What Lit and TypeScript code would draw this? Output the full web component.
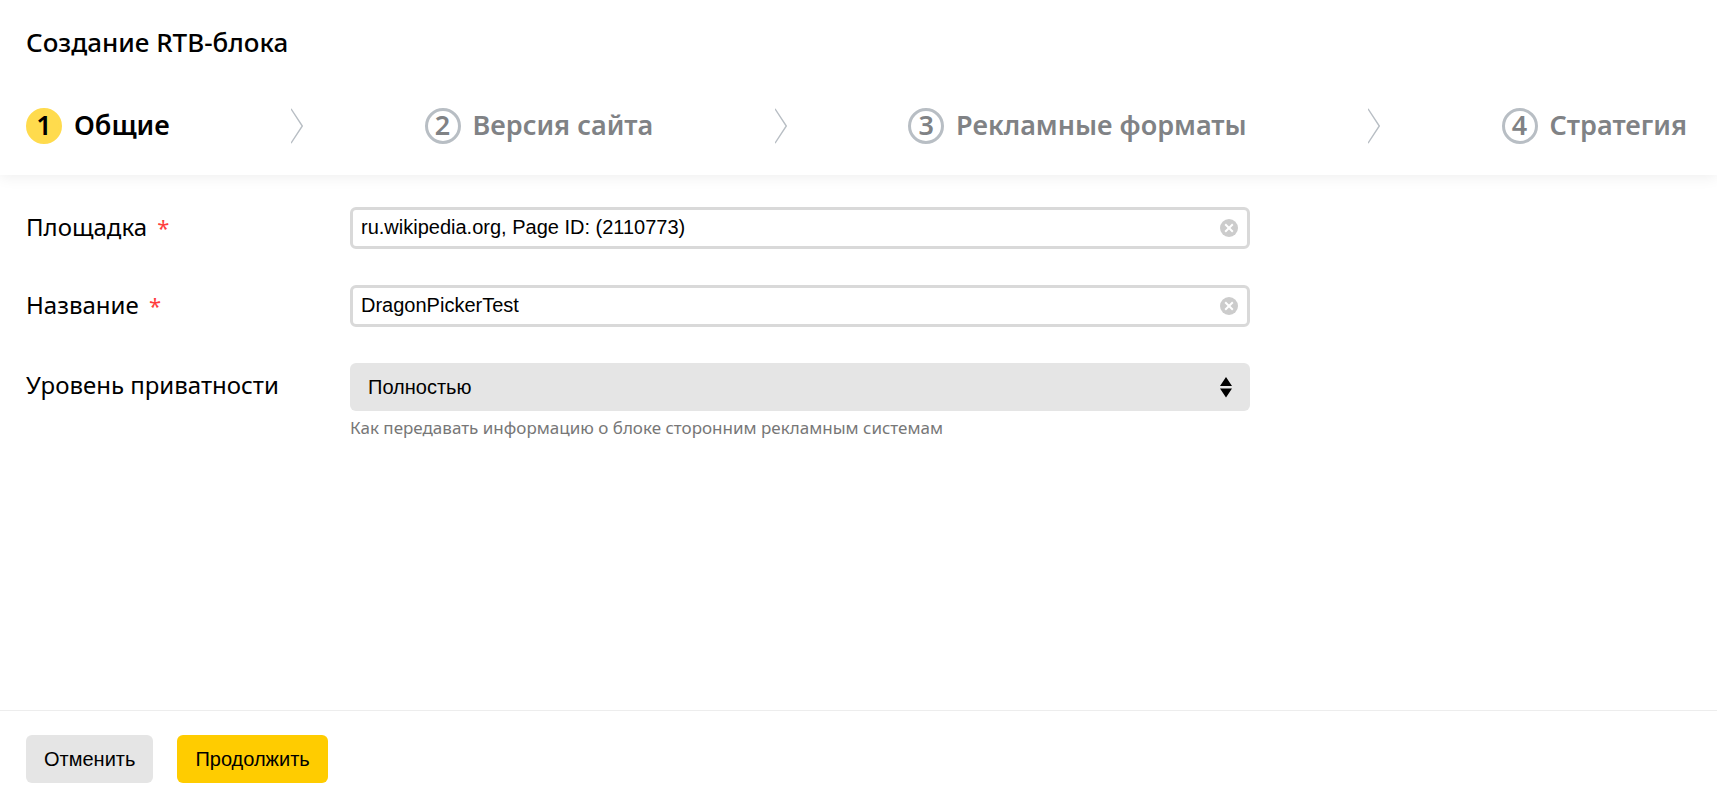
import { LitElement, html, css } from "lit";
import { customElement, state } from "lit/decorators.js";
import { classMap } from "lit/directives/class-map.js";

const STEPS = ["Общие", "Версия сайта", "Рекламные форматы", "Стратегия"];

@customElement("clearable-input")
class ClearableInput extends LitElement {
  static properties = { label: {}, value: {} };
  declare label: string;
  declare value: string;

  static styles = css`
    :host {
      display: block;
    }
    .box {
      display: flex;
      align-items: center;
      box-sizing: border-box;
      height: 42px;
      padding: 0 8px;
      border: 3px solid #d9d9d9;
      border-radius: 6px;
      background: #fff;
    }
    .input {
      flex: 1;
      min-width: 0;
      height: 32px;
      margin-bottom: 2px;
      padding: 0;
      border: 0;
      outline: 0;
      background: none;
      color: #000;
      font: 20px/32px Arial, "Liberation Sans", sans-serif;
    }
    .clear {
      display: flex;
      padding: 0;
      border: 0;
      background: none;
      cursor: pointer;
    }
  `;

  render() {
    return html`
      <div class="box">
        <input
          class="input"
          type="text"
          aria-label=${this.label}
          .value=${this.value}
          @input=${(e: Event) => (this.value = (e.target as HTMLInputElement).value)}
        />
        <button class="clear" type="button" aria-label="Очистить" @click=${() => (this.value = "")}>
          <svg width="20" height="20" viewBox="0 0 20 20">
            <circle cx="10" cy="10" r="9" fill="#ccc" />
            <path d="M6.2 6.2 13.800 13.800M13.800 6.2 6.2 13.800" stroke="#fff" stroke-width="2" />
          </svg>
        </button>
      </div>
    `;
  }
}

@customElement("app-root")
class AppRoot extends LitElement {
  @state() private current = 0;

  static styles = css`
    :host {
      display: flex;
      flex-direction: column;
      min-height: 100vh;
      background: #fff;
      color: #000;
      font-family: "Noto Sans", sans-serif;
    }
    .header {
      padding: 24px 26px 31px;
      box-shadow: 0 2px 14px rgba(0, 0, 0, 0.07);
    }
    .title {
      margin: 0 0 48px;
      font-size: 26px;
      line-height: 36px;
      font-weight: 500;
    }
    .steps {
      display: flex;
      justify-content: space-between;
      align-items: center;
      margin: 0;
      padding: 0 4px 0 0;
      list-style: none;
    }
    .step {
      display: flex;
      align-items: center;
      gap: 12px;
      color: #808285;
      font-size: 27px;
      line-height: 34px;
      font-weight: 600;
      white-space: nowrap;
    }
    .name {
      padding-bottom: 2px;
    }
    .number {
      box-sizing: border-box;
      width: 36px;
      height: 36px;
      border: 3px solid #b8bec4;
      border-radius: 50%;
      line-height: 28px;
      text-align: center;
    }
    .active {
      color: #000;
    }
    .active .number {
      border-color: #ffdb4d;
      background: #ffdb4d;
    }
    .arrow {
      display: flex;
    }
    .form {
      flex: 1;
      display: grid;
      grid-template-columns: 324px minmax(0, 900px);
      align-content: start;
      row-gap: 36px;
      padding: 32px 26px;
    }
    .label {
      font-size: 24px;
      line-height: 40px;
      white-space: nowrap;
    }
    .label-select {
      line-height: 44px;
    }
    .required {
      margin-left: 4px;
      color: #ff3d3d;
      font-size: 22px;
    }
    .select-box {
      display: grid;
      align-items: center;
    }
    .select {
      grid-area: 1 / 1;
      width: 100%;
      height: 48px;
      padding: 0 48px 0 18px;
      border: 0;
      border-radius: 6px;
      appearance: none;
      background: #e5e5e5;
      color: #000;
      font: 20px Arial, "Liberation Sans", sans-serif;
    }
    .select-icon {
      grid-area: 1 / 1;
      justify-self: end;
      margin-right: 18px;
      pointer-events: none;
    }
    .hint {
      margin: 4px 0 0;
      color: #777;
      font-size: 17px;
      line-height: 26px;
    }
    .footer {
      display: flex;
      gap: 24px;
      padding: 24px 26px 14px;
      border-top: 1px solid #ededed;
    }
    .button {
      height: 48px;
      padding: 0 18px;
      border: 0;
      border-radius: 6px;
      background: #e5e5e5;
      color: #000;
      font: 20px Arial, "Liberation Sans", sans-serif;
      cursor: pointer;
    }
    .primary {
      background: #ffcc00;
    }
  `;

  private renderStep(name: string, index: number) {
    return html`
      ${index
        ? html`<li class="arrow" aria-hidden="true">
            <svg width="12" height="36" viewBox="0 0 12 36" fill="none">
              <path d="M0 .8 11.3 18 0 35.2" stroke="#b8bec4" stroke-width="1.4" />
            </svg>
          </li>`
        : ""}
      <li class=${classMap({ step: true, active: index === this.current })}>
        <span class="number">${index + 1}</span>
        <span class="name">${name}</span>
      </li>
    `;
  }

  render() {
    return html`
      <header class="header">
        <h1 class="title">Создание RTB-блока</h1>
        <ol class="steps">
          ${STEPS.map((name, index) => this.renderStep(name, index))}
        </ol>
      </header>
      <form class="form" id="form">
        <label class="label" @click=${() => this.focusField("site")}
          >Площадка <span class="required">*</span></label
        >
        <clearable-input id="site" label="Площадка" value="ru.wikipedia.org, Page ID: (2110773)"></clearable-input>
        <label class="label" @click=${() => this.focusField("name")}
          >Название <span class="required">*</span></label
        >
        <clearable-input id="name" label="Название" value="DragonPickerTest"></clearable-input>
        <label class="label label-select" for="privacy">Уровень приватности</label>
        <div>
          <div class="select-box">
            <select class="select" id="privacy" aria-describedby="hint">
              <option>Полностью</option>
            </select>
            <svg class="select-icon" width="12" height="22" viewBox="0 0 12 22">
              <path d="M6 1 12 10H0ZM0 12.500H12L6 21.500Z" fill="#000" />
            </svg>
          </div>
          <p class="hint" id="hint">Как передавать информацию о блоке сторонним рекламным системам</p>
        </div>
      </form>
      <footer class="footer">
        <button class="button" type="button">Отменить</button>
        <button class="button primary" type="button">Продолжить</button>
      </footer>
    `;
  }

  private focusField(id: string) {
    this.renderRoot.querySelector(`#${id}`)?.shadowRoot?.querySelector("input")?.focus();
  }
}
